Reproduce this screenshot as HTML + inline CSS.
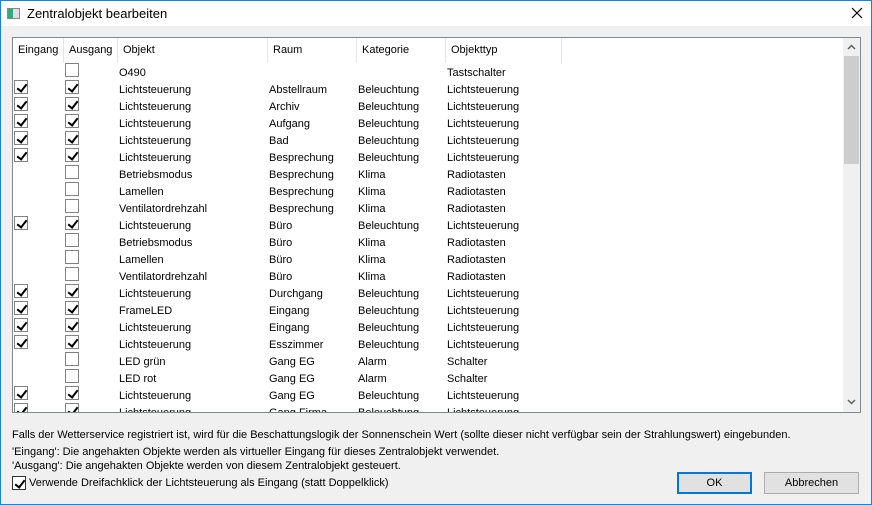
<!DOCTYPE html>
<html><head><meta charset="utf-8"><style>
*{margin:0;padding:0;box-sizing:border-box}
body{width:872px;height:505px;background:#f0f0f0;font-family:"Liberation Sans",Tahoma,sans-serif;font-size:11px;color:#000;position:relative;overflow:hidden}
.win{position:absolute;left:0;top:0;width:872px;height:505px;border:1px solid #1883d7}
.title{position:absolute;left:1px;top:1px;width:870px;height:25px;background:#fff}
.title .t{position:absolute;left:26px;top:5px;font-size:13px}
.ico{position:absolute;left:6px;top:7px;width:13px;height:11px;border:1px solid #888;background:linear-gradient(90deg,#3a7 0 5px,#dde 5px)}
.x{position:absolute;left:850px;top:6px}
.lb{position:absolute;left:12px;top:37px;width:849px;height:376px;border:1px solid #828790;background:#fff;overflow:hidden}
.hd{position:absolute;top:0;height:25px;line-height:25px;padding-left:5px;border-right:1px solid #e5e5e5}
.row{position:absolute;left:0;height:17px;width:830px}
.c{position:absolute;top:2px;line-height:17px;white-space:nowrap}
.cb{position:absolute;top:0;width:14px;height:14px;border:1px solid #828282;background:#fff}
.cb.k::after{content:"";position:absolute;left:4px;top:1px;width:4px;height:8px;border:solid #000;border-width:0 2px 2px 0;transform:rotate(38deg)}
.sb{position:absolute;left:830px;top:0;width:17px;height:374px;background:#f0f0f0}
.th{position:absolute;left:1px;top:18px;width:15px;height:108px;background:#cdcdcd}
.txt{position:absolute;left:12px;white-space:nowrap}
.btn{position:absolute;top:472px;height:22px;border:1px solid #adadad;background:#e1e1e1;text-align:center;line-height:20px}
</style></head><body>
<div class="win"></div>
<div class="title"><div class="ico"></div><div class="t">Zentralobjekt bearbeiten</div>
<svg class="x" width="12" height="12"><path d="M1 1L11 11M11 1L1 11" stroke="#000" stroke-width="1.2"/></svg></div>
<div class="lb">
<div class="hd" style="left:0;width:51px">Eingang</div>
<div class="hd" style="left:51px;width:54px">Ausgang</div>
<div class="hd" style="left:105px;width:150px">Objekt</div>
<div class="hd" style="left:255px;width:89px">Raum</div>
<div class="hd" style="left:344px;width:89px">Kategorie</div>
<div class="hd" style="left:433px;width:116px">Objekttyp</div>
<div id="rows"></div>
<div class="sb"><svg style="position:absolute;left:4px;top:6px" width="9" height="6"><path d="M1 5L4.5 1.5L8 5" stroke="#606060" stroke-width="1.5" fill="none"/></svg><div class="th"></div><svg style="position:absolute;left:4px;top:361px" width="9" height="6"><path d="M1 1L4.5 4.5L8 1" stroke="#606060" stroke-width="1.5" fill="none"/></svg></div>
</div>
<div class="txt" style="top:429px">Falls der Wetterservice registriert ist, wird für die Beschattungslogik der Sonnenschein Wert (sollte dieser nicht verfügbar sein der Strahlungswert) eingebunden.</div>
<div class="txt" style="top:446px">'Eingang': Die angehakten Objekte werden als virtueller Eingang für dieses Zentralobjekt verwendet.</div>
<div class="txt" style="top:460px">'Ausgang': Die angehakten Objekte werden von diesem Zentralobjekt gesteuert.</div>
<div class="cb k" style="left:12px;top:476px;position:absolute;border-color:#333"></div>
<div class="txt" style="left:29px;top:477px">Verwende Dreifachklick der Lichtsteuerung als Eingang (statt Doppelklick)</div>
<div class="btn" style="left:677px;width:75px;border:2px solid #0078d7;line-height:18px">OK</div>
<div class="btn" style="left:764px;width:95px">Abbrechen</div>
<script>
var d=[[0,0,"O490","","","Tastschalter"],[1,1,"Lichtsteuerung","Abstellraum","Beleuchtung","Lichtsteuerung"],[1,1,"Lichtsteuerung","Archiv","Beleuchtung","Lichtsteuerung"],[1,1,"Lichtsteuerung","Aufgang","Beleuchtung","Lichtsteuerung"],[1,1,"Lichtsteuerung","Bad","Beleuchtung","Lichtsteuerung"],[1,1,"Lichtsteuerung","Besprechung","Beleuchtung","Lichtsteuerung"],[-1,0,"Betriebsmodus","Besprechung","Klima","Radiotasten"],[-1,0,"Lamellen","Besprechung","Klima","Radiotasten"],[-1,0,"Ventilatordrehzahl","Besprechung","Klima","Radiotasten"],[1,1,"Lichtsteuerung","Büro","Beleuchtung","Lichtsteuerung"],[-1,0,"Betriebsmodus","Büro","Klima","Radiotasten"],[-1,0,"Lamellen","Büro","Klima","Radiotasten"],[-1,0,"Ventilatordrehzahl","Büro","Klima","Radiotasten"],[1,1,"Lichtsteuerung","Durchgang","Beleuchtung","Lichtsteuerung"],[1,1,"FrameLED","Eingang","Beleuchtung","Lichtsteuerung"],[1,1,"Lichtsteuerung","Eingang","Beleuchtung","Lichtsteuerung"],[1,1,"Lichtsteuerung","Esszimmer","Beleuchtung","Lichtsteuerung"],[-1,0,"LED grün","Gang EG","Alarm","Schalter"],[-1,0,"LED rot","Gang EG","Alarm","Schalter"],[1,1,"Lichtsteuerung","Gang EG","Beleuchtung","Lichtsteuerung"],[1,1,"Lichtsteuerung","Gang Firma","Beleuchtung","Lichtsteuerung"]];
var h="";d.forEach(function(r,i){var y=25+17*i;h+='<div class="row" style="top:'+y+'px">';
if(r[0]>0)h+='<div class="cb k" style="left:1px"></div>';
h+='<div class="cb'+(r[1]?' k':'')+'" style="left:52px"></div>';
h+='<div class="c" style="left:106px">'+r[2]+'</div><div class="c" style="left:256px">'+r[3]+'</div><div class="c" style="left:345px">'+r[4]+'</div><div class="c" style="left:434px">'+r[5]+'</div></div>';});
document.getElementById("rows").innerHTML=h;
</script>
</body></html>
